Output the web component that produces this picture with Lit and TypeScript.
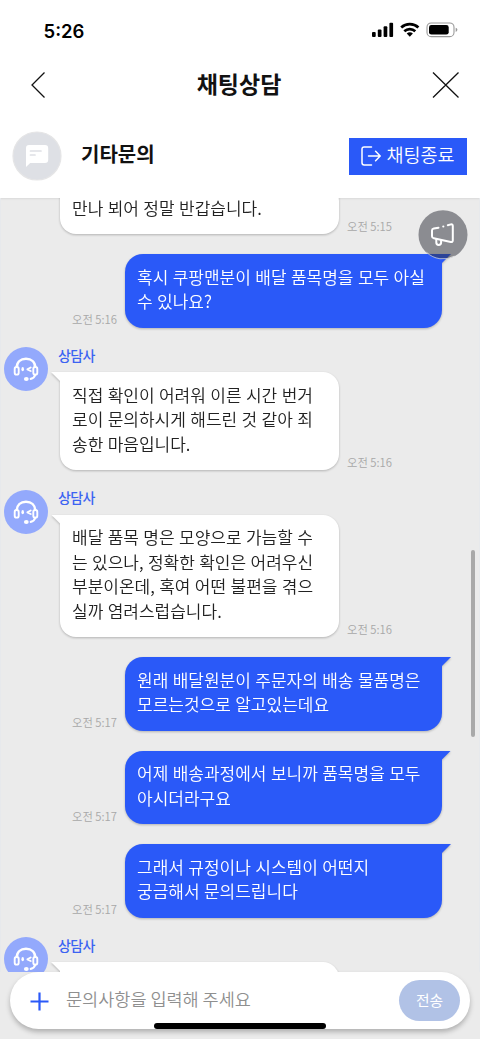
import { LitElement, html, css, svg } from "lit";
import { customElement, property } from "lit/decorators.js";

interface Message {
  from: "agent" | "me";
  lines: string[];
  time: string;
  continued?: boolean;
}

const MESSAGES: Message[] = [
  { from: "agent", lines: ["만나 뵈어 정말 반갑습니다."], time: "오전 5:15", continued: true },
  { from: "me", lines: ["혹시 쿠팡맨분이 배달 품목명을 모두 아실", "수 있나요?"], time: "오전 5:16" },
  { from: "agent", lines: ["직접 확인이 어려워 이른 시간 번거", "로이 문의하시게 해드린 것 같아 죄", "송한 마음입니다."], time: "오전 5:16" },
  { from: "agent", lines: ["배달 품목 명은 모양으로 가늠할 수", "는 있으나, 정확한 확인은 어려우신", "부분이온데, 혹여 어떤 불편을 겪으", "실까 염려스럽습니다."], time: "오전 5:16" },
  { from: "me", lines: ["원래 배달원분이 주문자의 배송 물품명은", "모르는것으로 알고있는데요"], time: "오전 5:17" },
  { from: "me", lines: ["어제 배송과정에서 보니까 품목명을 모두", "아시더라구요"], time: "오전 5:17" },
  { from: "me", lines: ["그래서 규정이나 시스템이 어떤지", "궁금해서 문의드립니다"], time: "오전 5:17" },
  { from: "agent", lines: ["\u00a0"], time: "" },
];

const headset = svg`
  <circle cx="22" cy="22" r="22" fill="#93a9fc"/>
  <path d="M12.700 21C12.700 15 16.700 11.800 22 11.800s9.300 3.200 9.300 9.200" fill="none" stroke="#fff" stroke-width="2.500"/>
  <rect x="10.700" y="20" width="4" height="7.600" rx="1.900" fill="#93a9fc" stroke="#fff" stroke-width="1.900"/>
  <rect x="29.300" y="20" width="4" height="7.600" rx="1.900" fill="#93a9fc" stroke="#fff" stroke-width="1.900"/>
  <path d="M31.300 27.800c-.7 2.300-2.200 3.700-4.600 4.100" fill="none" stroke="#fff" stroke-width="2.100" stroke-linecap="round"/>
  <ellipse cx="22.300" cy="32" rx="2.400" ry="1.900" fill="#fff"/>
  <ellipse cx="18.700" cy="22.200" rx="1.300" ry="2.100" fill="#fff"/>
  <path d="M26.700 20.500 23.400 22.300l3.300 1.700" fill="none" stroke="#fff" stroke-width="1.900" stroke-linecap="round" stroke-linejoin="round"/>`;

@customElement("chat-message")
class ChatMessage extends LitElement {
  @property({ attribute: false }) message!: Message;

  static styles = css`
    :host { display: block; }
    .row { display: flex; align-items: flex-end; }
    .me { justify-content: flex-end; padding-right: 38px; }
    .agent { align-items: flex-start; padding-left: 4px; }
    .avatar { width: 44px; height: 44px; flex: none; display: block; margin-top: -0.500px; }
    .column { margin-left: 10px; }
    .name { height: 24.5px; line-height: 15px; font-size: 14px; font-weight: 500; letter-spacing: -0.6px; color: #3c63f2; }
    .line { display: flex; align-items: flex-end; padding-left: 2px; }
    .bubble { position: relative; box-sizing: border-box; padding: 10.500px 12px 14px; font-size: 17px; line-height: 24.5px; white-space: nowrap; word-spacing: 0.600px; }
    .text { display: block; }
    .agent .bubble { width: 279px; background: #fff; color: #222; font-weight: 350; border-radius: 0 16px 16px 16px; filter: drop-shadow(0 1px 1px rgba(0,0,0,.24)); }
    .me .bubble { width: 317px; background: #2a59f8; color: #fff; font-weight: 350; border-radius: 18px 0 18px 18px; filter: drop-shadow(0 1px 1px rgba(0,0,0,.24)); }
    .bubble::before { content: ""; position: absolute; top: 0; width: 10px; height: 10px; }
    .agent .bubble::before { left: -9px; background: #fff; clip-path: polygon(0 0, 100% 0, 100% 100%); }
    .me .bubble::before { right: -9px; background: #2a59f8; clip-path: polygon(0 0, 100% 0, 0 100%); }
    .continued { padding-left: 58px; }
    .time { font-size: 11.300px; line-height: 17px; font-weight: 350; color: #a8a8a8; margin: 0 8px -0.500px; white-space: nowrap; }
  `;

  render() {
    const m = this.message;
    const bubble = html`<div class="bubble">${m.lines.map((l) => html`<span class="text">${l}</span>`)}</div>`;
    const time = html`<span class="time">${m.time}</span>`;
    if (m.from === "me") return html`<div class="row me">${time}${bubble}</div>`;
    if (m.continued) return html`<div class="row agent continued"><div class="line">${bubble}${time}</div></div>`;
    return html`<div class="row agent">
      <svg class="avatar" viewBox="0 0 44 44">${headset}</svg>
      <div class="column">
        <div class="name">상담사</div>
        <div class="line">${bubble}${time}</div>
      </div>
    </div>`;
  }
}

@customElement("app-root")
class AppRoot extends LitElement {
  static styles = css`
    :host { display: flex; flex-direction: column; position: relative; width: 480px; height: 1039px; overflow: hidden; background: #ebebeb; font-family: "Noto Sans CJK KR", sans-serif; color: #111; }
    .status { height: 60px; flex: none; background: #fff; display: flex; justify-content: space-between; align-items: center; padding: 0 22px 0 43.500px; box-sizing: border-box; }
    .clock { font: 600 18.500px/24px Inter, sans-serif; color: #000; letter-spacing: 0; margin-top: 2px; }
    .indicators { display: block; }
    .nav { height: 50px; flex: none; background: #fff; display: flex; align-items: center; justify-content: space-between; padding: 0 20px 0 30px; }
    .title { font-size: 23px; line-height: 34px; font-weight: 700; letter-spacing: 0; margin: 0 0 4px; }
    .topic { height: 88px; flex: none; background: #fff; display: flex; align-items: center; padding: 4px 13px 0 12px; box-sizing: border-box; }
    .subject { font-size: 20px; line-height: 30px; font-weight: 700; flex: 1; margin: 0 0 5px 19px; }
    .end { display: flex; align-items: center; gap: 6px; width: 118.500px; height: 37px; padding: 0 0 0 12px; box-sizing: border-box; border: 0; background: #2a59f8; color: #fff; font: 350 18.500px/26px "Noto Sans CJK KR", sans-serif; white-space: nowrap; }
    .end span { margin-bottom: 4px; }
    .chat { height: 774px; flex: none; box-sizing: border-box; overflow: hidden; border: solid #e7e9ec; border-width: 0 1px; box-shadow: inset 0 3px 2px -2px rgba(0,0,0,.08); }
    .list { display: flex; flex-direction: column; gap: 20px; margin: -13px -1px 0; }
    .composer { height: 57px; flex: none; margin: 0 10px; background: #fff; border-radius: 29px; box-shadow: 0 3px 5px rgba(0,0,0,.25); display: flex; align-items: center; padding: 0 10px 0 20px; }
    .plus { display: block; margin-top: 2px; }
    .placeholder { flex: 1; font-size: 17.500px; line-height: 26px; font-weight: 350; color: #8f8f8f; margin: 0 0 4px 17px; }
    .send { width: 61px; height: 41px; border: 0; padding: 0 0 2px; border-radius: 21px; background: #b1c2e6; color: #fff; font: 400 14.800px/22px "Noto Sans CJK KR", sans-serif; }
    .notice { position: absolute; left: 418px; top: 210px; }
    .scrollbar { position: absolute; left: 471px; top: 550px; width: 4px; height: 187px; border-radius: 2px; background: #a9a9a9; }
    .home { position: absolute; left: 154px; top: 1023px; width: 172px; height: 6px; border-radius: 3px; background: #000; }
  `;

  render() {
    return html`
      <div class="status">
        <span class="clock">5:26</span>
        <svg class="indicators" width="86" height="16" viewBox="0 0 86 16">
          <g fill="#000">
            <rect x="0" y="10" width="3.700" height="5" rx="1"/>
            <rect x="5.800" y="7.400" width="3.700" height="7.600" rx="1"/>
            <rect x="11.600" y="4.200" width="3.700" height="10.800" rx="1"/>
            <rect x="17.400" y="0.800" width="3.700" height="14.200" rx="1"/>
            <path d="M37.800 14.800 34.700 11.600a4.600 4.600 0 0 1 6.200 0z"/>
          </g>
          <g fill="none" stroke="#000" stroke-width="2.700">
            <path d="M29.200 5.600a12.600 12.600 0 0 1 17.200 0"/>
            <path d="M32.300 9.200a8.100 8.100 0 0 1 11 0"/>
          </g>
          <rect x="55" y="1" width="27" height="13.600" rx="4.200" fill="none" stroke="#999" stroke-width="1.100"/>
          <rect x="57" y="3" width="19.700" height="9.600" rx="2.400" fill="#000"/>
          <path d="M83.700 5.700v4.200q1.700-.6 1.700-2.100t-1.700-2.100z" fill="#999"/>
        </svg>
      </div>
      <div class="nav">
        <svg width="16" height="28" viewBox="0 0 16 28"><path d="M14.500 1.500 2 14l12.500 12.500" fill="none" stroke="#111" stroke-width="1.300"/></svg>
        <h1 class="title">채팅상담</h1>
        <svg width="28" height="28" viewBox="0 0 28 28"><path d="M1 1.500l25.500 25M26.500 1.500 1 26.500" fill="none" stroke="#111" stroke-width="1.300"/></svg>
      </div>
      <div class="topic">
        <svg width="50" height="50" viewBox="0 0 50 50">
          <circle cx="25" cy="25" r="24" fill="#dee0e5" stroke="#e5e5e6" stroke-width="1.200"/>
          <path d="M17 14h16a3.200 3.200 0 0 1 3.200 3.200v11.600A3.200 3.200 0 0 1 33 32H18.200L14 36V17a3 3 0 0 1 3-3z" fill="#fff"/>
          <path d="M18.500 20h10.500M18.500 24h4.500" stroke="#dee0e5" stroke-width="1.700" stroke-linecap="round"/>
        </svg>
        <span class="subject">기타문의</span>
        <button class="end">
          <svg width="20" height="20" viewBox="0 0 20 20" fill="none" stroke="#fff" stroke-width="1.500" stroke-linecap="round" stroke-linejoin="round">
            <path d="M10.500 1H3.200Q1 1 1 3.200v13.600Q1 19 3.200 19h7.300"/><path d="M7.500 10H19M14.600 5.300 19.200 10l-4.600 4.700"/>
          </svg>
          <span>채팅종료</span>
        </button>
      </div>
      <div class="chat">
        <div class="list">
          ${MESSAGES.map((m) => html`<chat-message .message=${m}></chat-message>`)}
        </div>
      </div>
      <div class="composer">
        <svg class="plus" width="19" height="19" viewBox="0 0 19 19"><path d="M9.500.5v18M.5 9.500h18" stroke="#2a59f8" stroke-width="2.200"/></svg>
        <span class="placeholder">문의사항을 입력해 주세요</span>
        <button class="send">전송</button>
      </div>
      <svg class="notice" width="50" height="50" viewBox="0 0 50 50">
        <circle cx="25" cy="24.700" r="24.500" fill="rgba(43,45,55,.5)"/>
        <path d="M8.500 42.300a24.200 24.200 0 0 0 28 3.800" fill="none" stroke="#fff" stroke-opacity=".6" stroke-width="1"/>
        <g fill="none" stroke="#fff" stroke-width="2" stroke-linecap="round" stroke-linejoin="round">
          <path d="M20.500 17.700 15.800 18.500Q14 18.800 14 20.500v5.800Q14 28 15.800 28.300L32.800 32q2 .3 2-1.700V16q0-2-2-1.600l-3 .9M25.200 16.600h.2"/>
          <path d="M18.300 29v3.600a2.400 2.400 0 0 0 4.800 0v-2.600"/>
        </g>
      </svg>
      <div class="scrollbar"></div>
      <div class="home"></div>
    `;
  }
}
